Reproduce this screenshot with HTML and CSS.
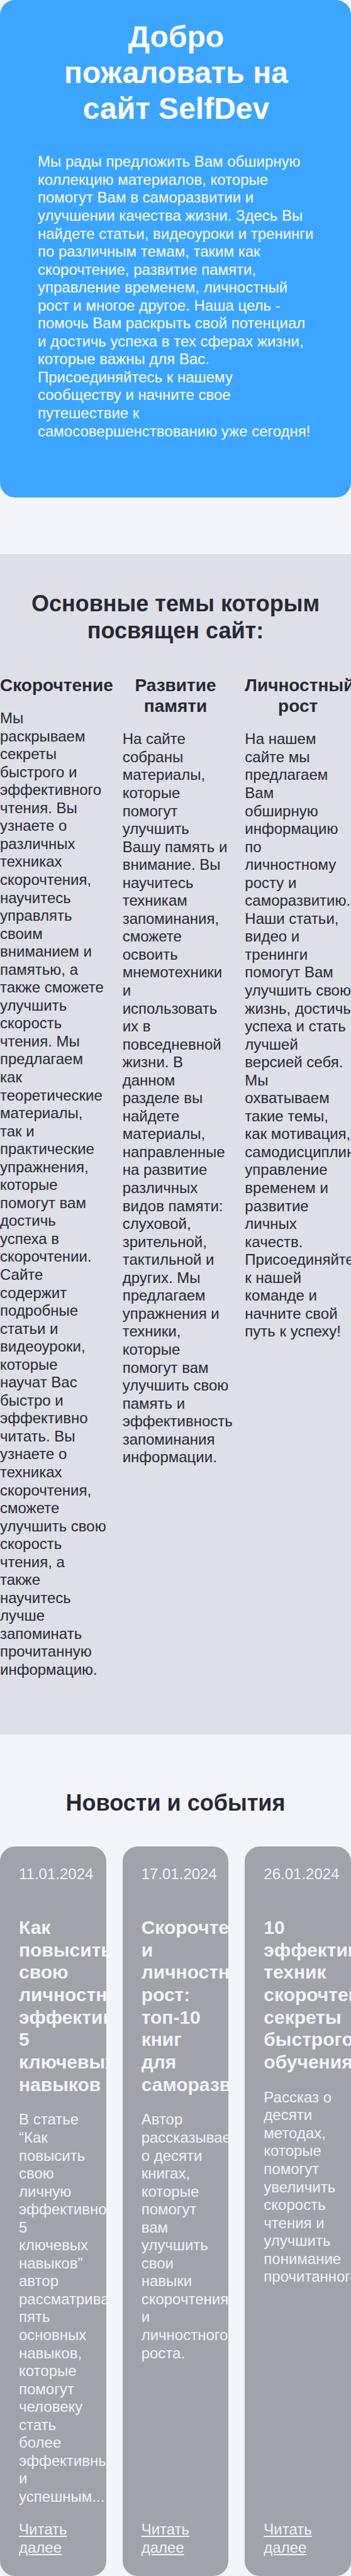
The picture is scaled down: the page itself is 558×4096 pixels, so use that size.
FILE: index.html
```html
<!DOCTYPE html>
<html lang="ru">
<head>
<meta charset="utf-8">
<meta name="viewport" content="width=device-width, initial-scale=1">
<title>SelfDev</title>
<link rel="stylesheet" href="styles.css">
</head>
<body>
<main class="page">
  <section class="hero">
    <h1 class="hero__title">Добро пожаловать на сайт SelfDev</h1>
    <p class="hero__text">Мы рады предложить Вам обширную коллекцию материалов, которые помогут Вам в саморазвитии и улучшении качества жизни. Здесь Вы найдете статьи, видеоуроки и тренинги по различным темам, таким как скорочтение, развитие памяти, управление временем, личностный рост и многое другое. Наша цель - помочь Вам раскрыть свой потенциал и достичь успеха в тех сферах жизни, которые важны для Вас. Присоединяйтесь к нашему сообществу и начните свое путешествие к самосовершенствованию уже сегодня!</p>
  </section>

  <section class="topics">
    <h2 class="section-title">Основные темы которым посвящен сайт:</h2>
    <div class="columns">
      <article class="topic">
        <h3 class="topic__title">Скорочтение</h3>
        <p>Мы раскрываем секреты быстрого и эффективного чтения. Вы узнаете о различных техниках скорочтения, научитесь управлять своим вниманием и памятью, а также сможете улучшить скорость чтения. Мы предлагаем как теоретические материалы, так и практические упражнения, которые помогут вам достичь успеха в скорочтении. Сайте содержит подробные статьи и видеоуроки, которые научат Вас быстро и эффективно читать. Вы узнаете о техниках скорочтения, сможете улучшить свою скорость чтения, а также научитесь лучше запоминать прочитанную информацию.</p>
      </article>
      <article class="topic">
        <h3 class="topic__title">Развитие памяти</h3>
        <p>На сайте собраны материалы, которые помогут улучшить Вашу память и внимание. Вы научитесь техникам запоминания, сможете освоить мнемотехники и использовать их в повседневной жизни. В данном разделе вы найдете материалы, направленные на развитие различных видов памяти: слуховой, зрительной, тактильной и других. Мы предлагаем упражнения и техники, которые помогут вам улучшить свою память и эффективность запоминания информации.</p>
      </article>
      <article class="topic">
        <h3 class="topic__title">Личностный рост</h3>
        <p>На нашем сайте мы предлагаем Вам обширную информацию по личностному росту и саморазвитию. Наши статьи, видео и тренинги помогут Вам улучшить свою жизнь, достичь успеха и стать лучшей версией себя. Мы охватываем такие темы, как мотивация, самодисциплина, управление временем и развитие личных качеств. Присоединяйтесь к нашей команде и начните свой путь к успеху!</p>
      </article>
    </div>
  </section>

  <section class="news">
    <h2 class="section-title">Новости и события</h2>
    <div class="columns">
      <article class="card">
        <time class="card__date" datetime="2024-01-11">11.01.2024</time>
        <h3 class="card__title">Как повысить свою личностную эффективность: 5 ключевых навыков</h3>
        <p class="card__text">В статье “Как повысить свою личную эффективность: 5 ключевых навыков” автор рассматривает пять основных навыков, которые помогут человеку стать более эффективным и успешным...</p>
        <a class="card__link" href="#">Читать далее</a>
      </article>
      <article class="card">
        <time class="card__date" datetime="2024-01-17">17.01.2024</time>
        <h3 class="card__title">Скорочтение и личностный рост: топ-10 книг для саморазвития</h3>
        <p class="card__text">Автор рассказывает о десяти книгах, которые помогут вам улучшить свои навыки скорочтения и личностного роста.</p>
        <a class="card__link" href="#">Читать далее</a>
      </article>
      <article class="card">
        <time class="card__date" datetime="2024-01-26">26.01.2024</time>
        <h3 class="card__title">10 эффективных техник скорочтения: секреты быстрого обучения</h3>
        <p class="card__text">Рассказ о десяти методах, которые помогут увеличить скорость чтения и улучшить понимание прочитанного.</p>
        <a class="card__link" href="#">Читать далее</a>
      </article>
    </div>
  </section>
</main>
</body>
</html>
```

FILE: styles.css
```css
* {
  box-sizing: border-box;
  margin: 0;
}

body {
  background: #f4f5fa;
  color: #282834;
  font-family: "Liberation Sans", Arial, sans-serif;
  font-size: 24px;
  line-height: 1.19;
}

.page {
  overflow: clip;
}

.hero {
  padding: 30px 58px 91px 60px;
  border-radius: 24px;
  background: #3ca5ff;
  color: #fff;
}

.hero__title {
  margin-bottom: 42px;
  font-size: 48px;
  text-align: center;
}

.section-title {
  margin-bottom: 48px;
  padding: 0 24px;
  font-size: 36px;
  text-align: center;
}

.columns {
  display: grid;
  grid-template-columns: repeat(3, minmax(0, 1fr));
  gap: 26px;
}

.topics {
  margin-top: 90px;
  padding: 58px 0 88px;
  background: #dfdfe8;
}

.topic__title {
  margin-bottom: 22px;
  font-size: 28px;
  text-align: center;
}

.news {
  padding: 88px 0 2px;
}

.card {
  display: flex;
  flex-direction: column;
  padding: 30px;
  border-radius: 24px;
  background: #a2a2ab;
  color: #f4f5fa;
  overflow: hidden;
}

.card__title {
  margin: 52px 0 24px;
  font-size: 30px;
}

.card__text {
  margin-bottom: 24px;
}

.card__link {
  margin-top: auto;
  color: inherit;
}
```
